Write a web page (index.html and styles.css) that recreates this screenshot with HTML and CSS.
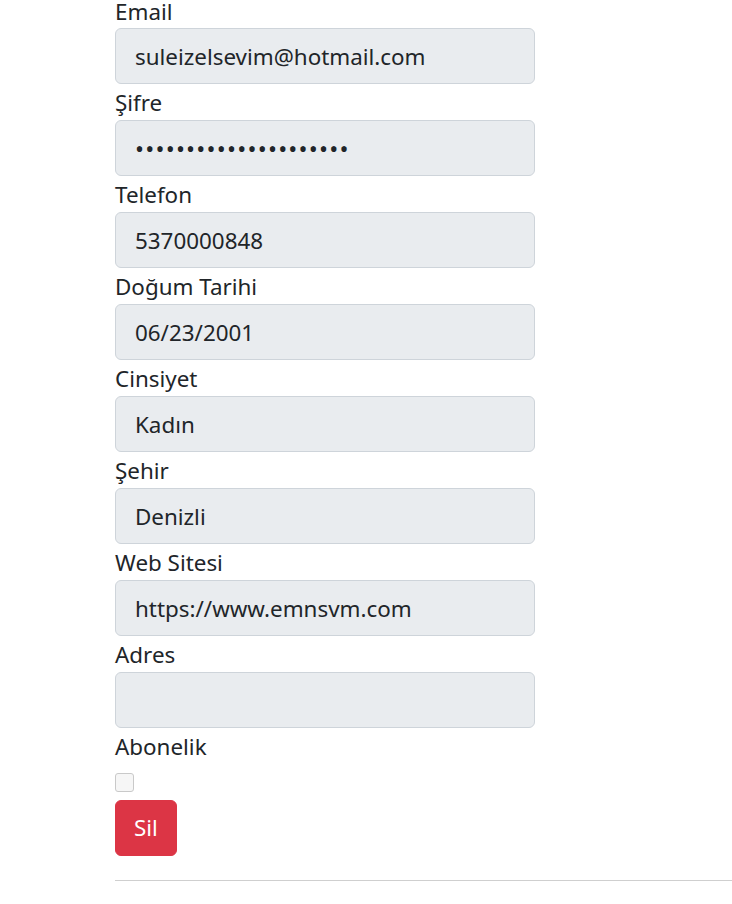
FILE: index.html
```html
<!DOCTYPE html>
<html lang="tr">
<head>
<meta charset="utf-8">
<title>Kullanıcı</title>
<link rel="stylesheet" href="styles.css">
</head>
<body>
<div class="page">
  <form class="form">
    <div class="group">
      <label class="label label-first">Email</label>
      <input class="control" type="text" value="suleizelsevim@hotmail.com" disabled>
    </div>
    <div class="group">
      <label class="label">Şifre</label>
      <input class="control secret" type="password" value="123456789012345678901" disabled>
    </div>
    <div class="group">
      <label class="label">Telefon</label>
      <input class="control" type="text" value="5370000848" disabled>
    </div>
    <div class="group">
      <label class="label">Doğum Tarihi</label>
      <input class="control" type="text" value="06/23/2001" disabled>
    </div>
    <div class="group">
      <label class="label">Cinsiyet</label>
      <input class="control" type="text" value="Kadın" disabled>
    </div>
    <div class="group">
      <label class="label">Şehir</label>
      <input class="control" type="text" value="Denizli" disabled>
    </div>
    <div class="group">
      <label class="label">Web Sitesi</label>
      <input class="control" type="text" value="https://www.emnsvm.com" disabled>
    </div>
    <div class="group">
      <label class="label">Adres</label>
      <input class="control" type="text" value="" disabled>
    </div>
    <div class="group">
      <label class="label">Abonelik</label>
      <div class="check-row"><span class="check"></span></div>
    </div>
    <button class="btn-danger" type="button">Sil</button>
  </form>
  <hr class="rule">
</div>
</body>
</html>
```

FILE: styles.css
```css
html, body {
  margin: 0;
  padding: 0;
  background: #fff;
}
body {
  font-family: "Noto Sans", "Open Sans", sans-serif;
  font-size: 22.4px;
  line-height: 1.5;
  color: #212529;
  overflow: hidden;
}
.page {
  padding-left: 115px;
}
.form {
  width: 420px;
  display: flex;
  flex-direction: column;
}
.group {
  display: flex;
  flex-direction: column;
}
.label {
  display: block;
  height: 36px;
  line-height: 38px;
}
.label-first {
  height: 28px;
  line-height: 23px;
}
.control {
  box-sizing: border-box;
  height: 56px;
  width: 420px;
  padding: 9px 19px;
  border: 1px solid #ced4da;
  border-radius: 6px;
  background: #e9ecef;
  color: #212529;
  font: inherit;
  line-height: 36px;
  margin: 0;
  opacity: 1;
  -webkit-text-fill-color: #212529;
}
.secret {
  font-size: 24px;
  letter-spacing: 1.2px;
}
.check-row {
  height: 36px;
  display: flex;
  align-items: center;
}
.check {
  box-sizing: border-box;
  width: 19px;
  height: 19px;
  border: 1px solid #c9c9c9;
  border-radius: 3px;
  background: #f6f6f6;
}
.btn-danger {
  align-self: flex-start;
  box-sizing: border-box;
  height: 56px;
  padding: 9px 18px;
  border: 1px solid #dc3545;
  border-radius: 6px;
  background: #dc3545;
  color: #fff;
  font: inherit;
  line-height: 36px;
}
.rule {
  margin: 24px 0 0 0;
  border: 0;
  border-top: 1px solid #cfcfcf;
  height: 0;
}
```
